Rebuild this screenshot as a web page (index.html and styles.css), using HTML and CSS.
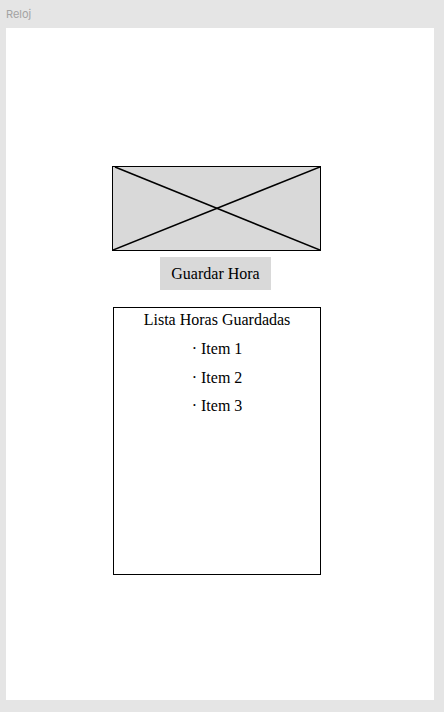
FILE: index.html
```html
<!DOCTYPE html>
<html lang="es">
<head>
<meta charset="utf-8">
<title>Reloj</title>
<link rel="stylesheet" href="styles.css">
</head>
<body>
<div class="label">Reloj</div>
<main class="frame">
  <div class="column">
    <div class="placeholder">
      <svg viewBox="0 0 207 83" preserveAspectRatio="none" width="207" height="83">
        <line x1="2" y1="0" x2="207" y2="83" stroke="#000" stroke-width="1.6"/>
        <line x1="0" y1="83" x2="207" y2="0" stroke="#000" stroke-width="1.6"/>
      </svg>
    </div>
    <button class="save">Guardar Hora</button>
    <section class="list">
      <h2 class="list-title">Lista Horas Guardadas</h2>
      <ul class="items">
        <li>· Item 1</li>
        <li>· Item 2</li>
        <li>· Item 3</li>
      </ul>
    </section>
  </div>
</main>
</body>
</html>
```
FILE: styles.css
```css
html, body {
  margin: 0;
  padding: 0;
}
body {
  background: #e5e5e5;
  width: 444px;
  height: 712px;
  overflow: hidden;
}
.label {
  font-family: Inter, "Liberation Sans", sans-serif;
  font-size: 11px;
  line-height: 14px;
  color: #a3a3a3;
  padding: 7px 0 0 6px;
  height: 21px;
}
.frame {
  margin-left: 6px;
  width: 428px;
  height: 672px;
  background: #fff;
  box-sizing: border-box;
  padding-top: 138px;
  padding-left: 106px;
}
.column {
  width: 209px;
  display: flex;
  flex-direction: column;
  align-items: center;
  font-family: "Liberation Serif", serif;
  font-size: 16px;
  color: #000;
}
.placeholder {
  width: 209px;
  height: 85px;
  box-sizing: border-box;
  border: 1px solid #000;
  background: #d9d9d9;
  display: flex;
}
.placeholder svg {
  display: block;
}
.save {
  margin-top: 6px;
  margin-right: 2px;
  width: 111px;
  height: 33px;
  border: none;
  background: #d9d9d9;
  font-family: "Liberation Serif", serif;
  font-size: 16px;
  color: #000;
  padding: 0;
}
.list {
  margin-top: 17px;
  margin-left: 1px;
  width: 208px;
  height: 268px;
  box-sizing: border-box;
  border: 1px solid #000;
  text-align: center;
}
.list-title {
  margin: 0 0 3px;
  font-size: 16px;
  font-weight: normal;
  line-height: 24px;
}
.items {
  list-style: none;
  margin: 0;
  padding: 0;
}
.items li {
  line-height: 28.5px;
}
```
